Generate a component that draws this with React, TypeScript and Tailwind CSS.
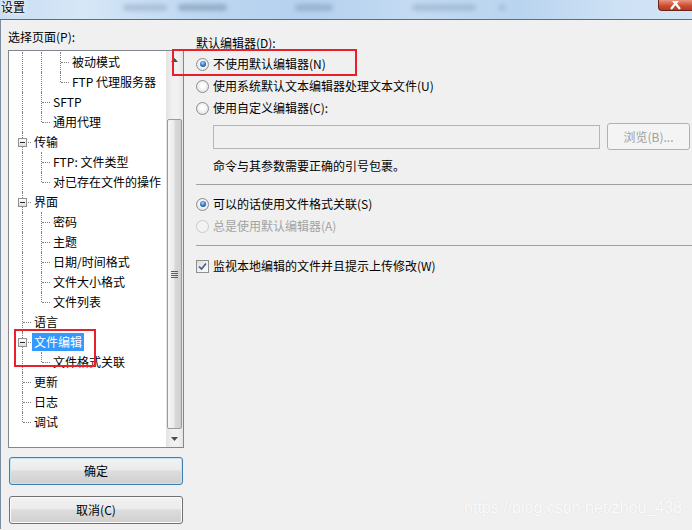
import React from "react";

interface Row {
  t: string;
  lv: number;
  cont: boolean[];
  last?: boolean;
  exp?: boolean;
  sel?: boolean;
}

const rows: Row[] = [
  { t: "被动模式", lv: 2, cont: [true, true] },
  { t: "FTP 代理服务器", lv: 2, last: true, cont: [true, true] },
  { t: "SFTP", lv: 1, cont: [true] },
  { t: "通用代理", lv: 1, last: true, cont: [true] },
  { t: "传输", lv: 0, exp: true, cont: [] },
  { t: "FTP: 文件类型", lv: 1, cont: [true] },
  { t: "对已存在文件的操作", lv: 1, last: true, cont: [true] },
  { t: "界面", lv: 0, exp: true, cont: [] },
  { t: "密码", lv: 1, cont: [true] },
  { t: "主题", lv: 1, cont: [true] },
  { t: "日期/时间格式", lv: 1, cont: [true] },
  { t: "文件大小格式", lv: 1, cont: [true] },
  { t: "文件列表", lv: 1, last: true, cont: [true] },
  { t: "语言", lv: 0, cont: [] },
  { t: "文件编辑", lv: 0, exp: true, sel: true, cont: [] },
  { t: "文件格式关联", lv: 1, last: true, cont: [true] },
  { t: "更新", lv: 0, cont: [] },
  { t: "日志", lv: 0, cont: [] },
  { t: "调试", lv: 0, last: true, cont: [] },
];

const TreeRow = ({ r }: { r: Row }) => (
  <div className="flex h-5 items-center">
    <div className="w-[4px] shrink-0" />
    {r.cont.map((c, i) => (
      <div key={i} className="relative h-5 w-[19px] shrink-0">
        {c && <div className="absolute left-[9px] top-0 h-5 border-l border-dotted border-[#7f7f7f]" />}
      </div>
    ))}
    <div className="relative h-5 w-[19px] shrink-0">
      <div
        className={`absolute left-[9px] top-0 border-l border-dotted border-[#7f7f7f] ${
          r.last ? "h-[10px]" : "h-5"
        }`}
      />
      <div className="absolute left-[10px] top-[10px] w-[8px] border-t border-dotted border-[#7f7f7f]" />
      {r.exp && (
        <div className="absolute left-[5px] top-[6px] flex h-[9px] w-[9px] items-center justify-center border border-[#919191] bg-[linear-gradient(#ffffff,#dedede)]">
          <div className="h-px w-[5px] bg-[#2b2b2b]" />
        </div>
      )}
    </div>
    <span
      className={`h-[18px] whitespace-nowrap px-[2px] leading-[18px] ${
        r.sel ? "bg-[#3399ff] text-white" : "text-black"
      }`}
    >
      {r.t}
    </span>
  </div>
);

const Radio = ({ on, dis }: { on?: boolean; dis?: boolean }) => (
  <span
    className={`flex h-[13px] w-[13px] shrink-0 items-center justify-center rounded-full border ${
      dis
        ? "border-[#cacaca] bg-[#f3f3f3]"
        : "border-[#8e8f8f] bg-[radial-gradient(circle_at_50%_45%,#ffffff_20%,#d8d8d8)]"
    }`}
  >
    {on && (
      <span className="h-[6px] w-[6px] rounded-full bg-[radial-gradient(circle_at_45%_35%,#a6dcff,#2a6cc0_55%,#0d3a78)]" />
    )}
  </span>
);

const Arrow = ({ up }: { up?: boolean }) => (
  <div className="flex h-[17px] items-center justify-center">
    <svg width="7" height="4" viewBox="0 0 7 4">
      <path d={up ? "M0 4 L3.5 0 L7 4 Z" : "M0 0 L3.5 4 L7 0 Z"} fill="#4d4d4d" />
    </svg>
  </div>
);

export default function App() {
  return (
    <div className="relative h-[530px] w-[692px] overflow-hidden bg-[#f0f0f0] font-['Microsoft_YaHei','Noto_Sans_CJK_SC',sans-serif] text-[12px] text-black">
      {/* title bar */}
      <div className="relative flex h-[20px] items-start justify-between border-b border-[#5b6d82] bg-[linear-gradient(90deg,#c9def3_0%,#d6e7f7_12%,#bcd6f0_30%,#b5d1ef_45%,#c4dbf2_60%,#b9d4ef_75%,#cfe2f5_90%,#d2e4f6)]">
        <div className="absolute left-[123px] top-[4px] h-[7px] w-[44px] rounded bg-[#8ea6c0] opacity-50 blur-[2px]" />
        <div className="absolute left-[178px] top-[4px] h-[7px] w-[49px] rounded bg-[#6f88a6] opacity-50 blur-[2px]" />
        <div className="absolute left-[295px] top-[4px] h-[7px] w-[38px] rounded bg-[#7f97b3] opacity-50 blur-[2px]" />
        <div className="absolute left-[412px] top-[4px] h-[7px] w-[64px] rounded bg-[#8ea6c0] opacity-50 blur-[2px]" />
        <div className="absolute left-[498px] top-[4px] h-[7px] w-[8px] rounded bg-[#8ea6c0] opacity-40 blur-[2px]" />
        <span className="relative pl-[1px] text-[12px] leading-[14px] [text-shadow:0_0_6px_#fff,0_0_3px_#fff]">设置</span>
        <div className="relative mr-0 flex h-[11px] w-[34px] items-end justify-center overflow-hidden rounded-bl-[4px] border-b border-l border-[#6b2418] bg-[linear-gradient(#e9967f,#c94a30_60%,#b93a22)]">
          <svg width="12" height="10" viewBox="0 0 12 10" className="-mb-[1px]">
            <path d="M1 -3 L10 8 M10 -3 L1 8" stroke="#fff" strokeWidth="2.2" />
          </svg>
        </div>
      </div>

      <div className="flex h-[509px] border-l border-[#7d8da0]">
        {/* left column */}
        <div className="flex w-[183px] shrink-0 flex-col pl-[7px]">
          <div className="mt-[9px] h-[16px] leading-[16px]">选择页面(P):</div>
          <div className="mt-[5px] flex h-[398px] w-[176px] border border-[#828790] bg-white">
            <div className="flex-1 overflow-hidden pt-[1px]">
              {rows.map((r) => (
                <TreeRow key={r.t} r={r} />
              ))}
            </div>
            <div className="flex w-[17px] flex-col bg-[linear-gradient(90deg,#e3e3e3,#f1f1f1_40%,#f1f1f1_70%,#e6e6e6)]">
              <Arrow up />
              <div className="mx-[1px] mb-[1px] mt-[51px] flex flex-1 items-center justify-center rounded-[2px] border border-[#9a9a9a] bg-[linear-gradient(90deg,#f6f6f6,#ececec_45%,#d9d9d9_55%,#cfcfcf)]">
                <div className="flex flex-col gap-[1px]">
                  <div className="h-px w-[7px] bg-[#5f5f5f]" />
                  <div className="h-px w-[7px] bg-[#5f5f5f]" />
                  <div className="h-px w-[7px] bg-[#5f5f5f]" />
                  <div className="h-px w-[7px] bg-[#5f5f5f]" />
                </div>
              </div>
              <Arrow />
            </div>
          </div>
          <button className="ml-[1px] mt-[9px] h-[28px] w-[174px] rounded-[3px] border border-[#3c7fb1] bg-[linear-gradient(#f2f2f2,#ebebeb_45%,#dddddd_50%,#cfcfcf)] shadow-[inset_0_0_0_1px_#c4e5f6] text-[12px]">
            确定
          </button>
          <button className="ml-[1px] mt-[11px] h-[28px] w-[174px] rounded-[3px] border border-[#707070] bg-[linear-gradient(#f2f2f2,#ebebeb_45%,#dddddd_50%,#cfcfcf)] shadow-[inset_0_0_0_1px_#fbfbfb] text-[12px]">
            取消(C)
          </button>
        </div>

        {/* right column */}
        <div className="ml-[12px] flex flex-1 flex-col">
          <div className="mt-[15px] h-[16px] leading-[16px]">默认编辑器(D):</div>
          <div className="mt-[2px] flex h-[22px] items-center gap-[4px]">
            <Radio on />
            <span>不使用默认编辑器(N)</span>
          </div>
          <div className="flex h-[22px] items-center gap-[4px]">
            <Radio />
            <span>使用系统默认文本编辑器处理文本文件(U)</span>
          </div>
          <div className="flex h-[22px] items-center gap-[4px]">
            <Radio />
            <span>使用自定义编辑器(C):</span>
          </div>
          <div className="mt-[4px] flex h-[27px] items-center pl-[17px]">
            <div className="h-[24px] w-[387px] border border-[#b5b5b5] bg-[#f0f0f0]" />
            <div className="ml-[7px] flex h-[27px] w-[83px] items-center justify-center rounded-[3px] border border-[#adb2b5] bg-[#f4f4f4] text-[#a0a0a0]">
              浏览(B)...
            </div>
          </div>
          <div className="mt-[8px] h-[16px] pl-[17px] leading-[16px]">命令与其参数需要正确的引号包裹。</div>
          <div className="mt-[10px] h-px bg-[#a0a0a0]" />
          <div className="mt-[8px] flex h-[22px] items-center gap-[4px]">
            <Radio on />
            <span>可以的话使用文件格式关联(S)</span>
          </div>
          <div className="flex h-[22px] items-center gap-[4px]">
            <Radio dis />
            <span className="text-[#a3a3a3]">总是使用默认编辑器(A)</span>
          </div>
          <div className="mt-[8px] h-px bg-[#a0a0a0]" />
          <div className="mt-[9px] flex h-[22px] items-center gap-[4px]">
            <span className="flex h-[13px] w-[13px] shrink-0 items-center justify-center border border-[#8e8f8f] bg-[linear-gradient(135deg,#dcdcdc,#ffffff)]">
              <svg width="9" height="9" viewBox="0 0 9 9">
                <path d="M1 4.5 L3.5 7 L8 1.5" stroke="#4a5f8f" strokeWidth="1.7" fill="none" />
              </svg>
            </span>
            <span>监视本地编辑的文件并且提示上传修改(W)</span>
          </div>
        </div>
      </div>

      {/* annotations */}
      <div className="absolute left-[14px] top-[329px] h-[38px] w-[82px] border-2 border-[#e8202a]" />
      <div className="absolute left-[172px] top-[49px] h-[27px] w-[185px] border-2 border-[#e8202a]" />
      <div className="absolute right-[10px] top-[498px] font-['Liberation_Sans',Arial,sans-serif] text-[16px] leading-[20px] text-[#fbfbfb] [text-shadow:0_0_1px_#d6d6d6]">
        https://blog.csdn.net/zhou_438
      </div>
    </div>
  );
}
